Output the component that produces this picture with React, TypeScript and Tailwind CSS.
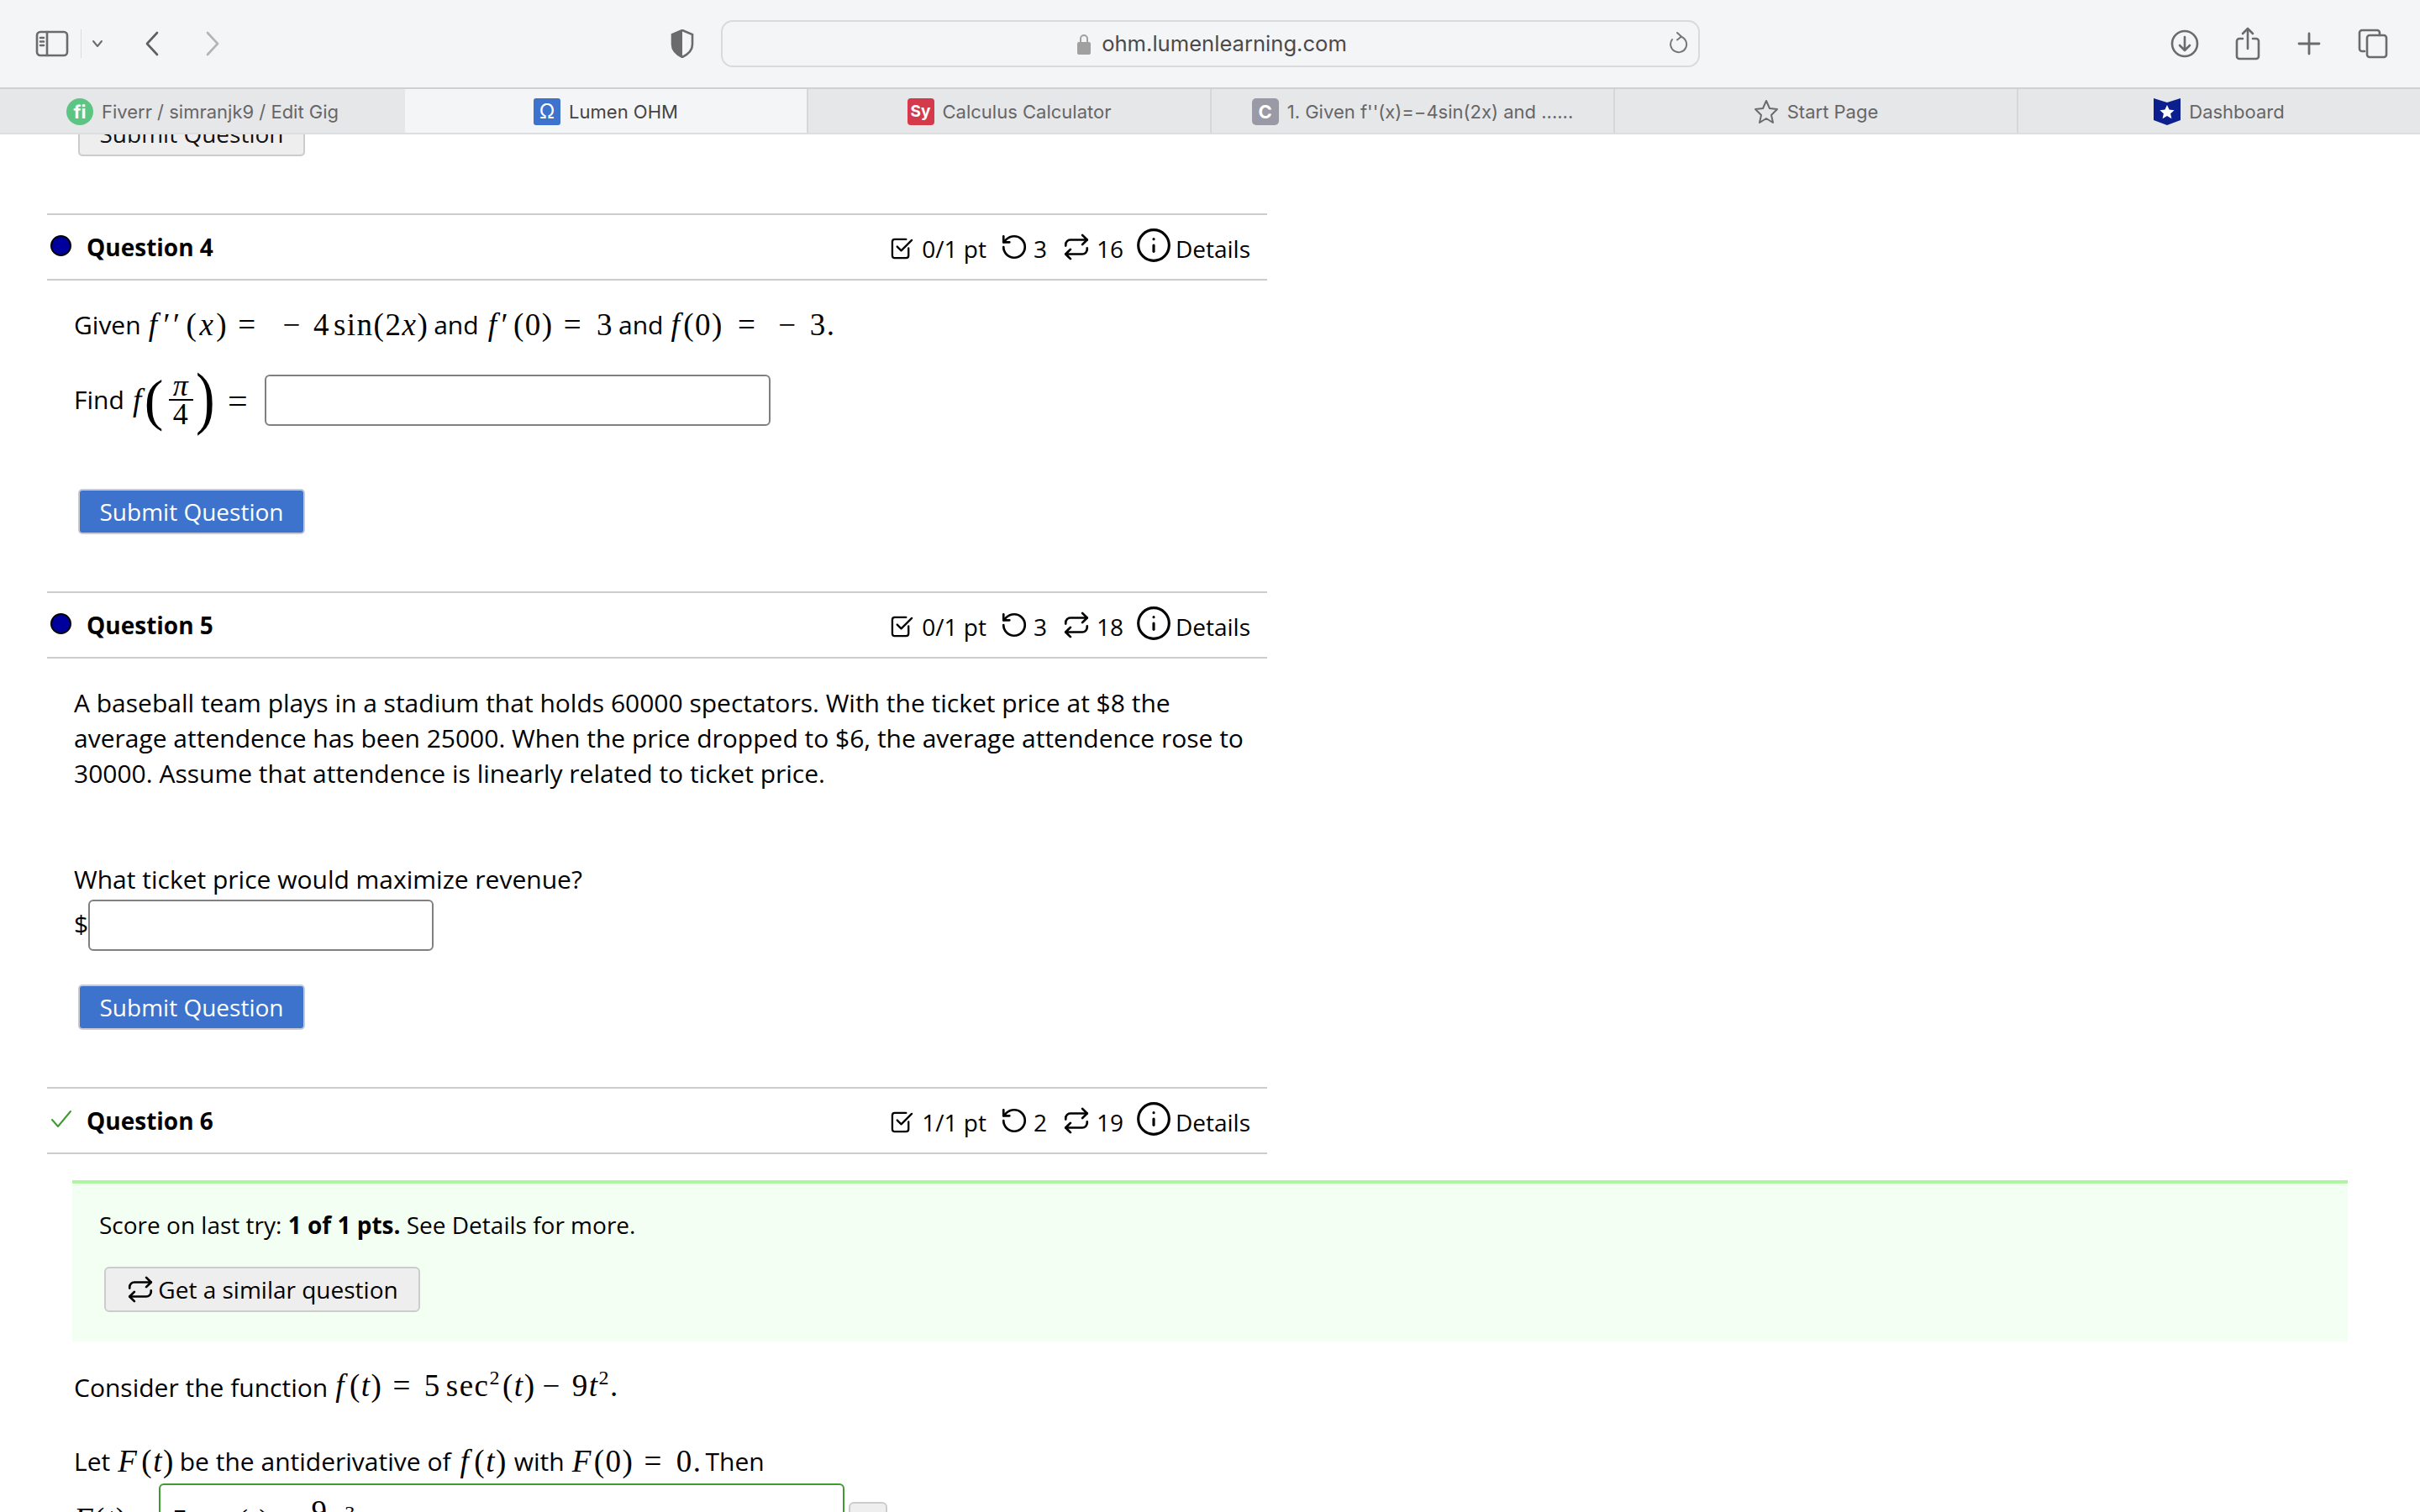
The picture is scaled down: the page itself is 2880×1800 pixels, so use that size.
import { ReactNode } from 'react';
import { Info, Repeat, RotateCcw } from 'lucide-react';

const inkStroke = { fill: 'none', stroke: 'currentColor', strokeLinecap: 'round', strokeLinejoin: 'round' } as const;

function CheckBoxIcon() {
  return (
    <svg viewBox="0 0 28 28" className="w-[27px] h-[27px]" {...inkStroke} strokeWidth="2.4">
      <path d="M22 14v9a3 3 0 0 1-3 3H5a3 3 0 0 1-3-3V6a3 3 0 0 1 3-3h14" />
      <path d="M8 12l5 5L26 4" />
    </svg>
  );
}

function SidebarIcon() {
  return (
    <svg viewBox="0 0 40 32" className="w-[40px] h-[32px] text-[#6b6b6d]" {...inkStroke} strokeWidth="2.6">
      <rect x="2" y="2" width="36" height="28" rx="4" />
      <path d="M14 2v28M6 9h4M6 13.5h4M6 18h4" />
    </svg>
  );
}

function Math({ children, className = '' }: { children: ReactNode; className?: string }) {
  return (
    <span className={`font-['Liberation_Serif',serif] text-[37px] tracking-[1.5px] whitespace-nowrap ${className}`}>{children}</span>
  );
}

function V({ children }: { children: ReactNode }) {
  return <i>{children}</i>;
}

// spaced operator, MathJax leaves a wide gap around these
function Op({ children }: { children: ReactNode }) {
  return <span className="mx-[12px]">{children}</span>;
}

function Sup({ children }: { children: ReactNode }) {
  return <span className="text-[24px] relative -top-[14px]">{children}</span>;
}

function Tab({ icon, label, active, first }: { icon: ReactNode; label: string; active?: boolean; first?: boolean }) {
  return (
    <div
      className={`h-full pt-[2px] flex items-center justify-center gap-[10px] text-[22px] ${first ? 'w-[482px]' : 'flex-1'} ${
        active ? 'bg-[#f4f5f7] text-[#444]' : 'bg-[#e6e7e9] text-[#666]'
      } ${first || active ? '' : 'border-l-2 border-[#d6d7d9]'}`}
    >
      {icon}
      <span>{label}</span>
    </div>
  );
}

function Favicon({ className, children }: { className: string; children: ReactNode }) {
  return <span className={`w-[32px] h-[32px] flex items-center justify-center text-white font-bold shrink-0 ${className}`}>{children}</span>;
}

function Browser() {
  return (
    <div className="font-['Inter',sans-serif] relative z-10">
      <div className="h-[104px] bg-[#f4f5f7] flex items-center relative">
        <div className="ml-[42px] flex items-center">
          <SidebarIcon />
          <div className="w-px h-[34px] bg-[#dddddf] ml-[14px]" />
          <svg viewBox="0 0 14 10" className="w-[14px] h-[10px] ml-[12px] text-[#6b6b6d]" {...inkStroke} strokeWidth="2">
            <path d="M2 2l5 6 5-6" />
          </svg>
          <svg viewBox="0 0 20 32" className="w-[20px] h-[32px] ml-[48px] text-[#5f5f61]" {...inkStroke} strokeWidth="2.6">
            <path d="M16 3L4 16l12 13" />
          </svg>
          <svg viewBox="0 0 20 32" className="w-[20px] h-[32px] ml-[52px] text-[#b4b4b6]" {...inkStroke} strokeWidth="2.6">
            <path d="M4 3l12 13L4 29" />
          </svg>
        </div>
        <svg viewBox="0 0 28 34" className="w-[28px] h-[34px] ml-[535px] shrink-0">
          <path d="M14 1l12 5v12c0 7-6 12-12 15C8 30 2 25 2 18V6z" fill="none" stroke="#6b6b6d" strokeWidth="2.6" />
          <path d="M14 1L2 6v12c0 7 6 12 12 15z" fill="#6b6b6d" />
        </svg>
        <div className="ml-[32px] w-[1165px] h-[56px] rounded-[14px] border-2 border-[#d9dadc] flex items-center justify-center relative text-[25.6px] text-[#4a4a4c]">
          <svg viewBox="0 0 16 26" className="w-[16px] h-[26px] mr-[13px] ml-[4px]">
            <path d="M4 12V7a4 4 0 0 1 8 0v5" fill="none" stroke="#a0a0a0" strokeWidth="2" />
            <rect x="0" y="11" width="16" height="15" rx="2" fill="#a0a0a0" />
          </svg>
          ohm.lumenlearning.com
          <svg viewBox="0 0 24 28" className="w-[24px] h-[28px] absolute right-[12px] top-[12px] text-[#77777a]" {...inkStroke} strokeWidth="2">
            <path d="M15 5.500A9.500 9.500 0 1 1 5 9" />
            <path d="M11 1l5 4.500-5 4" />
          </svg>
        </div>
        <div className="ml-auto mr-[38px] flex items-center text-[#6b6b6d]">
          <svg viewBox="0 0 34 34" className="w-[34px] h-[34px]" {...inkStroke} strokeWidth="2.6">
            <circle cx="17" cy="17" r="15" />
            <path d="M17 9v16M11 19l6 6 6-6" />
          </svg>
          <svg viewBox="0 0 30 40" className="w-[30px] h-[40px] ml-[43px]" {...inkStroke} strokeWidth="2.6">
            <path d="M9 14H5a3 3 0 0 0-3 3v18a3 3 0 0 0 3 3h20a3 3 0 0 0 3-3V17a3 3 0 0 0-3-3h-4M15 26V2M9 8l6-6 6 6" />
          </svg>
          <svg viewBox="0 0 28 28" className="w-[28px] h-[28px] ml-[44px]" {...inkStroke} strokeWidth="2.8">
            <path d="M14 2v24M2 14h24" />
          </svg>
          <svg viewBox="0 0 36 36" className="w-[36px] h-[36px] ml-[44px]" {...inkStroke} strokeWidth="2.6">
            <path d="M8 27H5a3 3 0 0 1-3-3V5a3 3 0 0 1 3-3h18a3 3 0 0 1 3 3v3" />
            <rect x="11" y="8" width="23" height="26" rx="3" />
          </svg>
        </div>
      </div>
      <div className="h-[56px] flex border-t-2 border-b-2 border-t-[#cfd0d2] border-b-[#dddee0]">
        <Tab
          first
          label="Fiverr / simranjk9 / Edit Gig"
          icon={<Favicon className="rounded-full bg-[#5dc583] text-[22px]">fi</Favicon>}
        />
        <Tab active label="Lumen OHM" icon={<Favicon className="rounded-[3px] bg-[#3d73cc] text-[24px] font-normal">Ω</Favicon>} />
        <Tab label="Calculus Calculator" icon={<Favicon className="rounded-[4px] bg-[#d53a4c] text-[19px]">Sy</Favicon>} />
        <Tab label={'1. Given f\'\'(x)=−4sin(2x) and ......'} icon={<Favicon className="rounded-[5px] bg-[#9a9aa6] text-[22px]">C</Favicon>} />
        <Tab
          label="Start Page"
          icon={
            <svg viewBox="0 0 30 30" className="w-[30px] h-[30px] text-[#6b6b6d]" {...inkStroke} strokeWidth="2">
              <path d="M15 2l4 9 9 1-7 7 2 9-8-5-8 5 2-9-7-7 9-1z" />
            </svg>
          }
        />
        <Tab
          label="Dashboard"
          icon={
            <svg viewBox="0 0 32 32" className="w-[32px] h-[32px]">
              <path d="M0 0l16 5 16-5v26l-16 6-16-6z" fill="#0b1f8f" />
              <path d="M16 8l2.600 5.600 6 .6-4.500 4 1.300 6L16 21l-5.400 3.200 1.300-6-4.500-4 6-.6z" fill="#fff" />
            </svg>
          }
        />
      </div>
    </div>
  );
}

function QuestionHeader({
  title,
  done,
  pts,
  tries,
  versions,
}: {
  title: string;
  done?: boolean;
  pts: string;
  tries: number;
  versions: number;
}) {
  return (
    <div className="w-[1452px] ml-[56px] h-[80px] border-y-2 border-[#cccccc] flex items-center text-[28px]">
      <div className="w-[47px] flex pl-[4px] -mt-[4px]">
        {done ? (
          <svg viewBox="0 0 26 24" className="w-[26px] h-[24px] text-[#3f9b2f]" {...inkStroke} strokeWidth="2">
            <path d="M2 13l7 8L24 3" />
          </svg>
        ) : (
          <span className="w-[25px] h-[25px] rounded-full bg-[#00009c] border-2 border-black" />
        )}
      </div>
      <span className="font-bold">{title}</span>
      <div className="ml-auto mr-[20px] flex items-center mt-[3px]">
        <CheckBoxIcon />
        <span className="ml-[10px]">{pts}</span>
        <RotateCcw className="w-[34px] h-[34px] ml-[16px] -mt-[3px]" strokeWidth={1.9} />
        <span className="ml-[6px]">{tries}</span>
        <Repeat className="w-[34px] h-[34px] ml-[18px] -mt-[3px]" strokeWidth={1.9} />
        <span className="ml-[7px]">{versions}</span>
        <Info className="w-[44px] h-[44px] ml-[14px] -mt-[7px]" strokeWidth={1.7} />
        <span className="ml-[4px]">Details</span>
      </div>
    </div>
  );
}

function SubmitButton({ className = '' }: { className?: string }) {
  return (
    <div className={`ml-[93px] w-[270px] h-[54px] rounded-[5px] border-2 border-[#c5cad4] bg-[#3d73cc] text-white text-[28px] flex items-center justify-center ${className}`}>
      Submit Question
    </div>
  );
}

function TextField({ className }: { className: string }) {
  return <div className={`rounded-[6px] border-2 border-[#808080] bg-white shrink-0 ${className}`} />;
}

function BigParen({ children }: { children: string }) {
  return <span className="text-[68px] leading-[60px] -mt-[8px] scale-y-[1.2]">{children}</span>;
}

export default function App() {
  return (
    <div className="h-[1800px] w-[2880px] overflow-hidden bg-white text-black font-['Open_Sans',sans-serif] text-[30px] leading-[42px]">
      <Browser />

      {/* clipped button of the previous question */}
      <div className="ml-[93px] w-[270px] h-[54px] -mt-[28px] rounded-[5px] border-2 border-[#cccccc] bg-[#eeeeee] flex items-center justify-center text-[28px] text-[#111]">
        Submit Question
      </div>

      <div className="mt-[68px]">
        <QuestionHeader title="Question 4" pts="0/1 pt" tries={3} versions={16} />
      </div>
      <div className="ml-[88px] mt-[31px] h-[44px] flex items-center whitespace-nowrap">
        <span>Given</span>
        <Math className="ml-[9px]">
          <V>f</V>
          <span className="ml-[6px]">′</span>
          <span className="ml-[2px] mr-[6px]">′</span>(<span className="ml-[2px] mr-[2px]"><V>x</V></span>)<Op>=</Op>
          <span className="ml-[19px]">−</span>
          <span className="ml-[14px]">4</span>
          <span className="ml-[4px]">sin(2<V>x</V>)</span>
        </Math>
        <span className="ml-[6px]">and</span>
        <Math className="ml-[11px]">
          <V>f</V>
          <span className="ml-[4px] mr-[5px]">′</span>(0)<Op>=</Op>
          <span className="ml-[5px]">3</span>
        </Math>
        <span className="ml-[6px]">and</span>
        <Math className="ml-[9px]">
          <V>f</V>
          <span className="ml-[3px] mr-[5px]">(0)</span>
          <Op>=</Op>
          <span className="ml-[14px]">−</span>
          <span className="ml-[15px]">3.</span>
        </Math>
      </div>
      <div className="ml-[88px] mt-[37px] h-[61px] flex items-center">
        <span className="w-[70px] shrink-0 -mt-[2px]">Find</span>
        <Math className="w-[157px] shrink-0 flex items-center">
          <V>f</V>
          <span className="ml-[2px]">
            <BigParen>(</BigParen>
          </span>
          <span className="inline-flex flex-col items-center text-[36px] leading-[32px] w-[29px] -mt-[2px] ml-[5px] mr-[3px]">
            <V>π</V>
            <span className="h-[2px] w-full bg-black" />
            <span>4</span>
          </span>
          <BigParen>)</BigParen>
          <span className="ml-[14px] text-[42px]">=</span>
        </Math>
        <TextField className="w-[602px] h-[61px]" />
      </div>
      <SubmitButton className="mt-[75px]" />

      <div className="mt-[68px]">
        <QuestionHeader title="Question 5" pts="0/1 pt" tries={3} versions={18} />
      </div>
      <div className="ml-[88px] mt-[32px] w-[1410px]">
        A baseball team plays in a stadium that holds 60000 spectators. With the ticket price at $8 the average
        attendence has been 25000. When the price dropped to $6, the average attendence rose to 30000. Assume that
        attendence is linearly related to ticket price.
      </div>
      <div className="ml-[88px] mt-[84px]">What ticket price would maximize revenue?</div>
      <div className="ml-[88px] mt-[3px] flex items-center">
        <span className="-mt-[3px]">$</span>
        <TextField className="w-[411px] h-[61px]" />
      </div>
      <SubmitButton className="mt-[40px]" />

      <div className="mt-[68px]">
        <QuestionHeader title="Question 6" done pts="1/1 pt" tries={2} versions={19} />
      </div>
      <div className="ml-[86px] mt-[31px] w-[2708px] h-[192px] border-t-4 border-[#aef5a0] bg-[#f3fff3] pl-[32px] pt-[28px] text-[28px]">
        <div>
          Score on last try: <b>1 of 1 pts.</b> See Details for more.
        </div>
        <div className="ml-[6px] mt-[29px] w-[376px] h-[54px] rounded-[6px] border-2 border-[#cccccc] bg-[#eeeeee] flex items-center justify-center gap-[4px]">
          <Repeat className="w-[34px] h-[34px]" strokeWidth={1.9} />
          Get a similar question
        </div>
      </div>
      <div className="ml-[88px] mt-[33px] h-[44px] flex items-center whitespace-nowrap">
        <span>Consider the function</span>
        <Math className="ml-[9px]">
          <V>f</V>
          <span className="ml-[5px]">(<V>t</V>)</span>
          <Op>=</Op>
          <span className="ml-[3px]">5</span>
          <span className="ml-[6px]">sec</span>
          <Sup>2</Sup>
          <span className="ml-[2px]">(<V>t</V>)</span>
          <span className="mx-[8px]">−</span>
          <span className="ml-[5px]">9</span>
          <V>t</V>
          <Sup>2</Sup>.
        </Math>
      </div>
      <div className="ml-[88px] mt-[44px] h-[44px] flex items-center whitespace-nowrap">
        <span>Let</span>
        <Math className="ml-[9px]">
          <V>F</V>
          <span className="ml-[4px]">(<V>t</V>)</span>
        </Math>
        <span className="ml-[6px]">be the antiderivative of</span>
        <Math className="ml-[11px]">
          <V>f</V>
          <span className="ml-[5px]">(<V>t</V>)</span>
        </Math>
        <span className="ml-[8px]">with</span>
        <Math className="ml-[9px]">
          <V>F</V>
          <span className="ml-[2px]">(0)</span>
          <Op>=</Op>
          <span className="ml-[4px]">0.</span>
        </Math>
        <span className="ml-[4px]">Then</span>
      </div>
      <div className="ml-[88px] mt-[4px] flex items-start whitespace-nowrap">
        <Math className="w-[101px] shrink-0 mt-[22px]">
          <V>F</V>(<V>t</V>)
          <span className="ml-[6px]">=</span>
        </Math>
        <div className="w-[816px] h-[90px] rounded-[6px] border-2 border-[#3f9b2f] bg-white pl-[14px] pt-[12px] flex items-start shrink-0">
          <Math className="mt-[10px]">
            5<span className="ml-[8px]">tan(<V>t</V>)</span>
            <Op>−</Op>
          </Math>
          <span className="inline-flex flex-col items-center w-[24px]">
            <Math className="leading-[40px]">9</Math>
            <span className="h-[2px] w-full bg-black" />
            <Math className="leading-[40px]">3</Math>
          </span>
          <Math className="ml-[6px] mt-[10px]">
            <V>t</V>
            <Sup>3</Sup>
          </Math>
        </div>
        <div className="ml-[5px] mt-[22px] w-[46px] h-[50px] rounded-[6px] border-2 border-[#cccccc] bg-[#eeeeee] shrink-0" />
      </div>
    </div>
  );
}
